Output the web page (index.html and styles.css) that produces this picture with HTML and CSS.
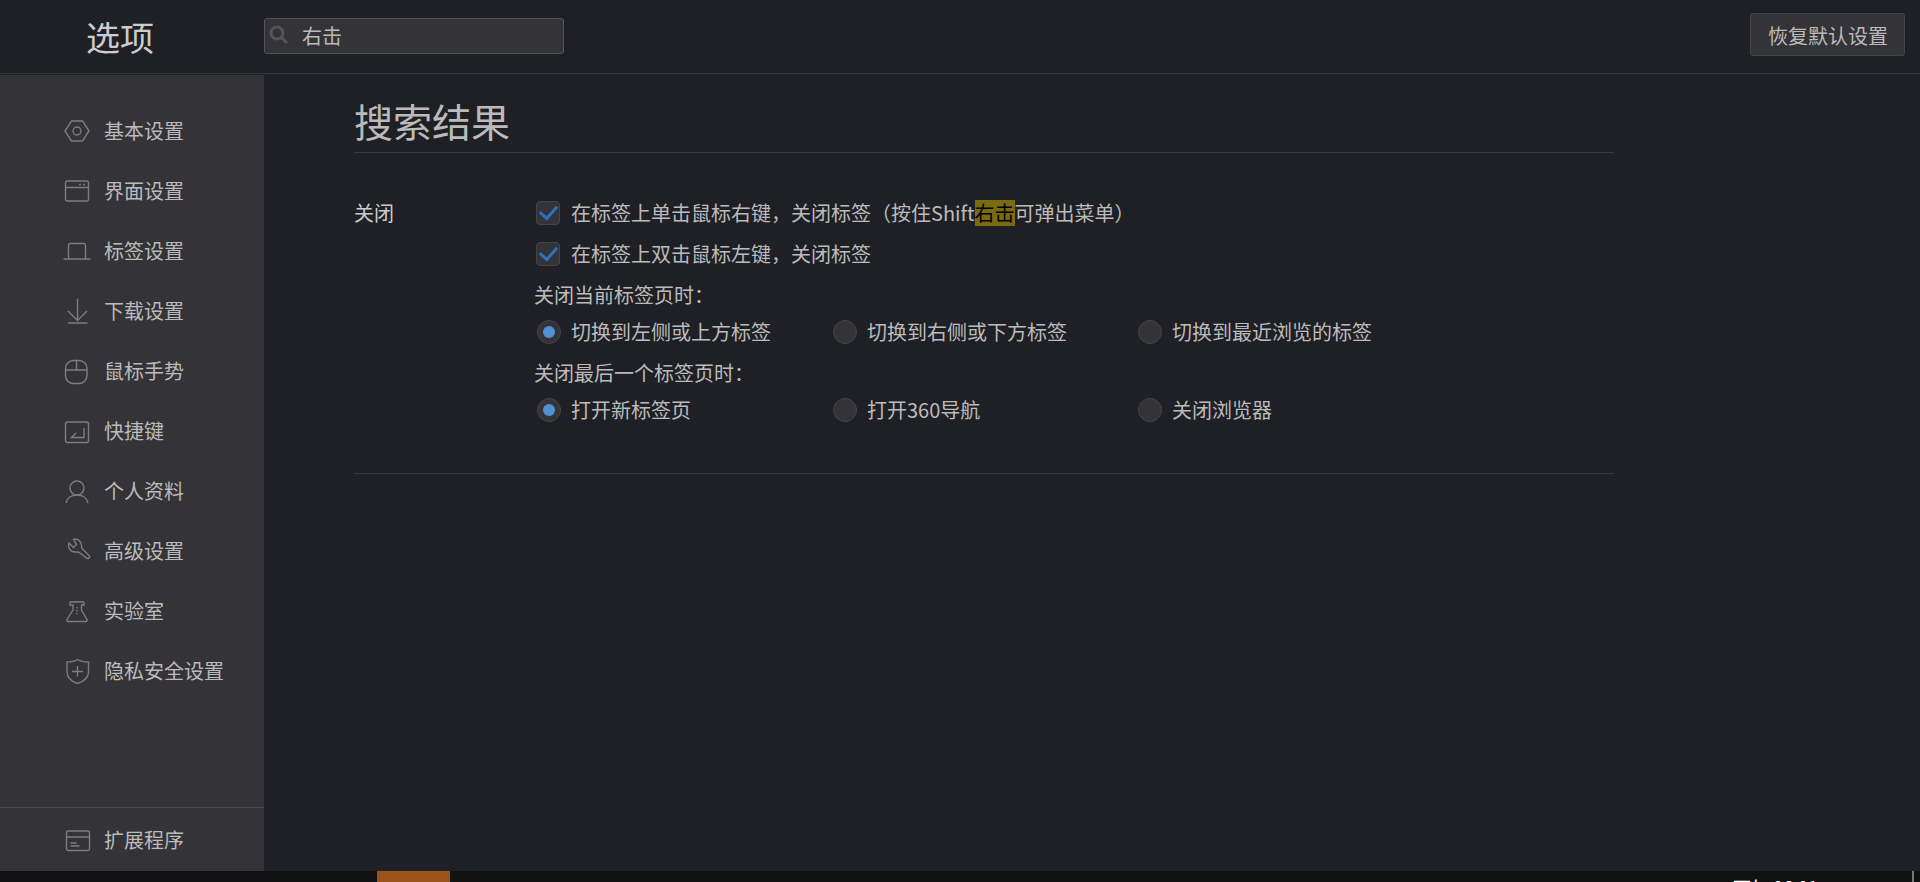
FILE: index.html
```html
<!DOCTYPE html>
<html lang="zh-CN">
<head>
    <meta charset="UTF-8">
    <meta name="viewport" content="width=device-width, initial-scale=1.0">
    <title>选项</title>
    <link rel="stylesheet" href="styles.css">
</head>
<body>
    <header class="header">
        <h1>选项</h1>
        <div class="search">
            <svg class="search-icon" viewBox="0 0 20 20"><circle cx="8" cy="8" r="6"/><path d="M12.5 12.5L18 18"/></svg>
            <input type="text" value="右击" aria-label="搜索">
        </div>
        <button type="button" class="reset">恢复默认设置</button>
    </header>

    <div class="page">
        <aside class="sidebar">
            <nav class="menu">
                <a href="#basic">
                    <svg viewBox="0 0 28 28"><path d="M8.5 4h11L26 14l-6.500 10h-11L2 14z"/><circle cx="14" cy="14" r="4"/></svg>
                    基本设置
                </a>
                <a href="#ui">
                    <svg viewBox="0 0 28 28"><rect x="2.500" y="4" width="23" height="20" rx="2"/><path d="M2.500 10.500h23M16 7.500h2M20 7.500h2"/></svg>
                    界面设置
                </a>
                <a href="#tabs">
                    <svg viewBox="0 0 28 28"><path d="M5.500 21.500v-13a2 2 0 0 1 2-2h13a2 2 0 0 1 2 2v13M0.500 22h27"/></svg>
                    标签设置
                </a>
                <a href="#download">
                    <svg viewBox="0 0 28 28"><path d="M14.500 1.500v22M5 14l9.500 9.500L24 14M5 26h19.500"/></svg>
                    下载设置
                </a>
                <a href="#mouse">
                    <svg viewBox="0 0 28 28"><rect x="2.500" y="3.500" width="21.500" height="23" rx="8"/><path d="M2.500 13h21.500M13.500 3.500v9.500"/></svg>
                    鼠标手势
                </a>
                <a href="#keys">
                    <svg viewBox="0 0 28 28"><rect x="2.500" y="5" width="23" height="20.500" rx="2"/><path d="M21 11v9.500H8.500l4.500-4.500"/></svg>
                    快捷键
                </a>
                <a href="#profile">
                    <svg viewBox="0 0 28 28"><circle cx="14" cy="11" r="7"/><path d="M3 26c1-5 5.500-8 11-8s10 3 11 8"/></svg>
                    个人资料
                </a>
                <a href="#advanced">
                    <svg viewBox="0 0 28 28"><path d="M10.500 2.500c4-1 8 1.500 8 6 0 1.500 0 2.500 1 3.500l6.500 6.500c1 1 0.500 2 0 2.500s-1.500 1-2.500 0L17 16c-1.500-1.500-3-1-5-1-4.500 0-7.500-4-6-9l4.500 4.500 3-3z"/></svg>
                    高级设置
                </a>
                <a href="#lab">
                    <svg viewBox="0 0 28 28"><path d="M7 5h14M7 5v3h3v5L4 22.500c-0.500 1 0 2 1 2h18c1 0 1.500-1 1-2L18.500 13V8H21V5"/><path d="M14 10v9" stroke-dasharray="1.500 1.500"/></svg>
                    实验室
                </a>
                <a href="#privacy">
                    <svg viewBox="0 0 28 28"><path d="M14.500 2.500c3 2 7 2.500 11 2.500v10c0 6-5 9.500-11 11.500C8.500 24.500 4 21 4 15V5c4 0 7.500-0.500 10.500-2.500zM14.500 9v10.500M9 14.500h11"/></svg>
                    隐私安全设置
                </a>
            </nav>
            <a href="#extensions" class="extensions">
                <svg viewBox="0 0 28 28"><rect x="3.500" y="5" width="23" height="19.500" rx="2"/><path d="M3.500 11h23M7.500 17h6M7.500 20h9"/></svg>
                扩展程序
            </a>
        </aside>

        <main class="content">
            <h2>搜索结果</h2>
            <section class="result">
                <h3>关闭</h3>
                <div class="options">
                    <label class="check">
                        <input type="checkbox" checked>
                        <span>在标签上单击鼠标右键，关闭标签（按住Shift<mark>右击</mark>可弹出菜单）</span>
                    </label>
                    <label class="check">
                        <input type="checkbox" checked>
                        <span>在标签上双击鼠标左键，关闭标签</span>
                    </label>
                    <fieldset>
                        <legend>关闭当前标签页时：</legend>
                        <div class="radios">
                            <label><input type="radio" name="current" checked>切换到左侧或上方标签</label>
                            <label><input type="radio" name="current">切换到右侧或下方标签</label>
                            <label><input type="radio" name="current">切换到最近浏览的标签</label>
                        </div>
                    </fieldset>
                    <fieldset>
                        <legend>关闭最后一个标签页时：</legend>
                        <div class="radios">
                            <label><input type="radio" name="last" checked>打开新标签页</label>
                            <label><input type="radio" name="last">打开360导航</label>
                            <label><input type="radio" name="last">关闭浏览器</label>
                        </div>
                    </fieldset>
                </div>
            </section>
        </main>
    </div>

    <footer class="taskbar">
        <span class="task"></span>
        <time class="clock">下午 06:01</time>
        <span class="desktop"></span>
    </footer>
</body>
</html>
```

FILE: styles.css
```css
* {
    box-sizing: border-box;
}
body {
    margin: 0;
    height: 100vh;
    display: flex;
    flex-direction: column;
    overflow: hidden;
    background-color: #1f2025;
    color: #bbb;
    font-family: "Noto Sans CJK SC", sans-serif;
    font-size: 20px;
    line-height: 26px;
}
h1, h2, h3 {
    margin: 0;
    font-weight: normal;
}
button, input {
    margin: 0;
    font: inherit;
    color: inherit;
}
svg {
    flex: none;
    fill: none;
    stroke: #7d7d7d;
    stroke-width: 1.4;
}

/* header */
.header {
    flex: none;
    display: flex;
    align-items: center;
    height: 74px;
    padding-right: 15px;
    border-bottom: 1px solid #343539;
}
.header h1 {
    width: 264px;
    padding-left: 86px;
    font-size: 34px;
    line-height: 40px;
    color: #ccc;
}
.search {
    position: relative;
    margin-bottom: 2px;
}
.search input {
    display: block;
    width: 300px;
    height: 36px;
    padding: 0 10px 0 37px;
    background-color: #343338;
    border: 1px solid #545458;
    border-radius: 3px;
    outline: none;
}
.search-icon {
    position: absolute;
    left: 5px;
    top: 7px;
    width: 20px;
    height: 20px;
    stroke: #545456;
    stroke-width: 3;
}
.reset {
    height: 43px;
    margin: 0 0 4px auto;
    padding: 2px 16px 0 17px;
    background-color: #343338;
    border: 1px solid #444448;
    border-radius: 3px;
    cursor: pointer;
}

/* sidebar */
.page {
    flex: 1;
    display: flex;
    min-height: 0;
}
.sidebar {
    flex: none;
    display: flex;
    flex-direction: column;
    justify-content: space-between;
    width: 264px;
    margin-top: 1px;
    background-color: #343338;
}
.menu {
    padding-top: 26px;
}
.sidebar a {
    display: flex;
    align-items: center;
    gap: 13px;
    height: 60px;
    padding-left: 63px;
    color: inherit;
    text-decoration: none;
}
.sidebar svg {
    width: 28px;
    height: 28px;
}
.sidebar .extensions {
    height: 64px;
    border-top: 1px solid #48484c;
}

/* search results */
.content {
    flex: 1;
    max-width: 1350px;
    padding: 20px 0 0 90px;
}
.content h2 {
    padding-bottom: 6px;
    border-bottom: 1px solid #38393c;
    font-size: 39px;
    line-height: 52px;
}
.result {
    display: flex;
    padding: 47px 0 50px;
    border-bottom: 1px solid #38393c;
}
.result h3 {
    width: 180px;
    font-size: 20px;
    color: #ccc;
}
.options {
    flex: 1;
}
.options label {
    display: flex;
    align-items: center;
}
.check {
    gap: 11px;
    margin-bottom: 15px;
    padding-left: 2px;
}
.options input {
    appearance: none;
    display: grid;
    place-items: center;
    flex: none;
    width: 24px;
    height: 24px;
    background-color: #343338;
    border: 1px solid #454549;
    border-radius: 4px;
}
.check input::before {
    content: "";
    width: 8px;
    height: 14px;
    margin-bottom: 8px;
    border: solid #2a72c0;
    border-width: 0 3px 3px 0;
    transform: rotate(42deg);
}
.options input[type="radio"] {
    border-radius: 50%;
}
.options input[type="radio"]:checked::before {
    content: "";
    width: 12px;
    height: 12px;
    border-radius: 50%;
    background-color: #5290d4;
}
mark {
    display: inline-block;
    background-color: #7a6a12;
    color: #000;
}
fieldset {
    margin: 0 0 15px;
    padding: 0;
    border: 0;
}
fieldset:last-child {
    margin-bottom: 0;
}
legend {
    padding: 0;
}
.radios {
    display: grid;
    grid-template-columns: 296px 305px auto;
    padding: 11px 0 0 3px;
}
.radios label {
    gap: 10px;
}

/* taskbar */
.taskbar {
    flex: none;
    display: flex;
    height: 11px;
    padding: 0 6px 0 377px;
    background-color: #111;
    color: #fff;
    overflow: hidden;
}
.task {
    width: 73px;
    background-color: #9c521b;
}
.clock {
    margin: 3px 94px 0 auto;
    font-size: 18px;
}
.desktop {
    width: 2px;
    background-color: #777;
}
```
